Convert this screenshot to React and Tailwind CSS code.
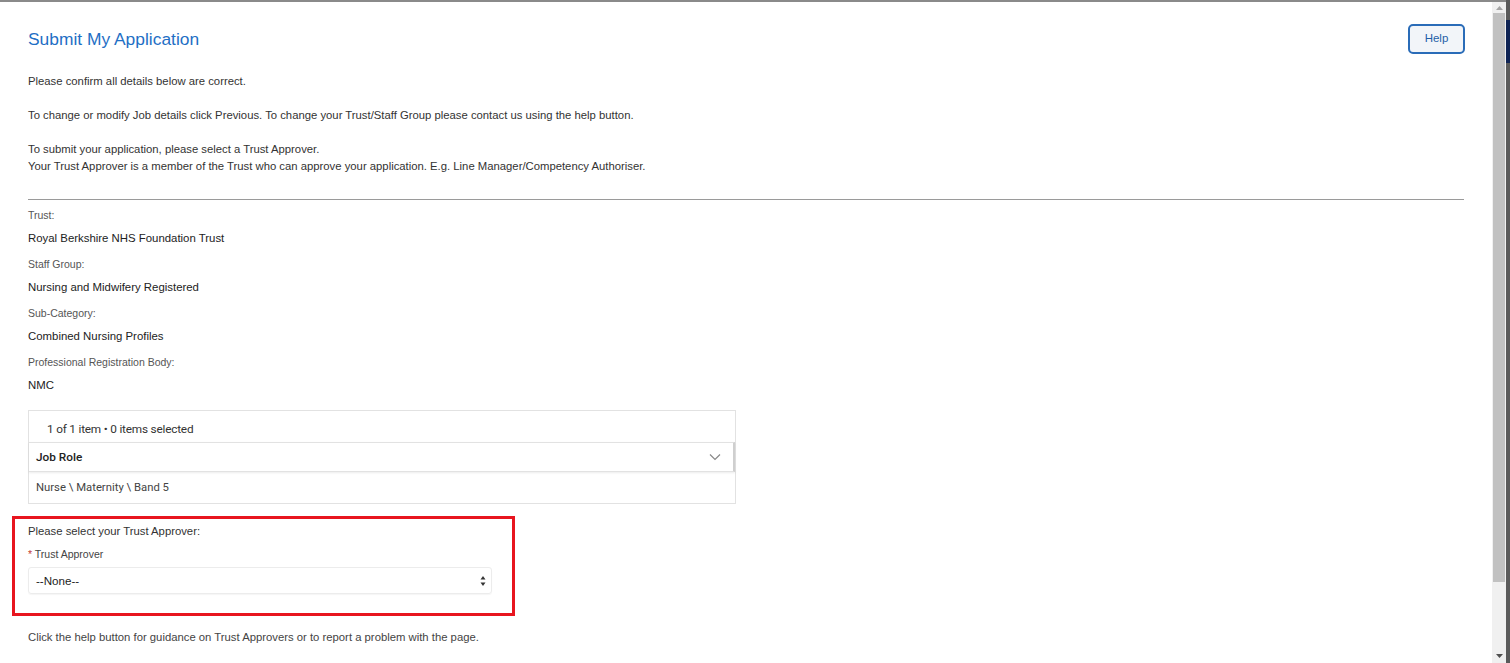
import React from 'react';

const details = [
  { label: 'Trust:', value: 'Royal Berkshire NHS Foundation Trust' },
  { label: 'Staff Group:', value: 'Nursing and Midwifery Registered' },
  { label: 'Sub-Category:', value: 'Combined Nursing Profiles' },
  { label: 'Professional Registration Body:', value: 'NMC' },
];

const App = () => {
  return (
    <div className="flex h-[663px] w-[1510px] overflow-hidden bg-white font-['Liberation_Sans',Arial,sans-serif] text-[#333]">
      {/* main page */}
      <div className="flex-1 border-t-2 border-[#8a8a8a]">
        <div className="flex items-start justify-between pl-7 pr-[27px] pt-[22px]">
          <h1 className="mt-[3px] text-[17.4px] leading-[24px] text-[#1f6fc5]">Submit My Application</h1>
          <button className="h-[30px] w-[57px] rounded-[5px] border-2 border-[#2a6cb8] bg-[#f2f5f9] text-[11.5px] text-[#1f5fa8]">
            Help
          </button>
        </div>

        <div className="pl-7 pr-[28px] text-[11.3px] leading-[17px] text-[#333]">
          <p className="mt-[19px]">Please confirm all details below are correct.</p>
          <p className="mt-[17px]">To change or modify Job details click Previous. To change your Trust/Staff Group please contact us using the help button.</p>
          <p className="mt-[17px]">To submit your application, please select a Trust Approver.</p>
          <p>Your Trust Approver is a member of the Trust who can approve your application. E.g. Line Manager/Competency Authoriser.</p>

          <div className="mt-[24px] h-px w-full bg-[#9a9a9a]"></div>

          <div className="mt-[7px] flex flex-col">
            {details.map(d => (
              <div key={d.label} className="flex flex-col">
                <span className="h-[24px] pt-[1px] text-[10.5px] leading-[14px] text-[#555]">{d.label}</span>
                <span className="h-[25px] text-[11.4px] leading-[14px] text-[#222]">{d.value}</span>
              </div>
            ))}
          </div>

          {/* job role table */}
          <div className="mt-[7px] w-[708px] border border-[#e2e2e2] font-['Roboto',sans-serif]">
            <div className="h-[31px] pl-[18px] pt-[11px] text-[11.8px] leading-[14px] tracking-[-0.2px] text-[#333]">
              1 of 1 item • 0 items selected
            </div>
            <div className="flex h-[30px] items-center justify-between border-y border-[#e2e2e2] border-r-2 border-r-[#cfcfcf] pl-[7px] pr-[12px] shadow-[0_1px_2px_rgba(0,0,0,0.08)]">
              <span className="text-[11.8px] font-medium text-[#222]">Job Role</span>
              <svg width="12" height="8" viewBox="0 0 12 8" fill="none" stroke="#888" strokeWidth="1.2">
                <path d="M1 1.5 L6 6.5 L11 1.5" />
              </svg>
            </div>
            <div className="flex h-[31px] items-center pl-[7px] text-[11.3px] text-[#444]">
              Nurse \ Maternity \ Band 5
            </div>
          </div>
        </div>

        {/* trust approver box */}
        <div className="ml-[12px] mt-[12px] h-[100px] w-[503px] border-[3px] border-[#e8151f] pl-[13px] pr-[20px] pt-[4px]">
          <p className="text-[11.3px] leading-[16px] text-[#333]">Please select your Trust Approver:</p>
          <p className="mt-[8px] text-[10.5px] leading-[14px] text-[#444]">
            <span className="text-[#c23934]">*</span> Trust Approver
          </p>
          <div className="mt-[6px] flex h-[27px] items-center justify-between rounded-[3px] border border-[#ececec] pl-[7px] pr-[5px] shadow-[0_1px_1px_rgba(0,0,0,0.04)]">
            <span className="text-[11.6px] text-[#222]">--None--</span>
            <svg width="6" height="12" viewBox="0 0 6 12" fill="#333">
              <path d="M3 1 L5.5 4.5 H0.5 Z" />
              <path d="M3 11 L5.5 7.5 H0.5 Z" />
            </svg>
          </div>
        </div>

        <p className="ml-7 mt-[13px] text-[11.3px] leading-[16px] text-[#444]">
          Click the help button for guidance on Trust Approvers or to report a problem with the page.
        </p>
      </div>

      {/* scrollbar */}
      <div className="flex w-[14px] flex-col border-t-2 border-[#8a8a8a] bg-[#f0f0f0]">
        <div className="flex h-[11px] items-center justify-center">
          <svg width="7" height="4" viewBox="0 0 7 4" fill="#a3a3a3"><path d="M3.5 0 L7 4 H0 Z" /></svg>
        </div>
        <div className="mx-[1px] h-[569px] bg-[#c1c1c1]"></div>
        <div className="flex-1"></div>
        <div className="flex h-[14px] items-center justify-center">
          <svg width="7" height="4" viewBox="0 0 7 4" fill="#505050"><path d="M0 0 H7 L3.5 4 Z" /></svg>
        </div>
      </div>

      {/* window edge */}
      <div className="flex w-[4px] flex-col bg-[#5a5a5a]">
        <div className="mt-[20px] h-[43px] bg-[#0e2354]"></div>
      </div>
    </div>
  );
};

export default App;
